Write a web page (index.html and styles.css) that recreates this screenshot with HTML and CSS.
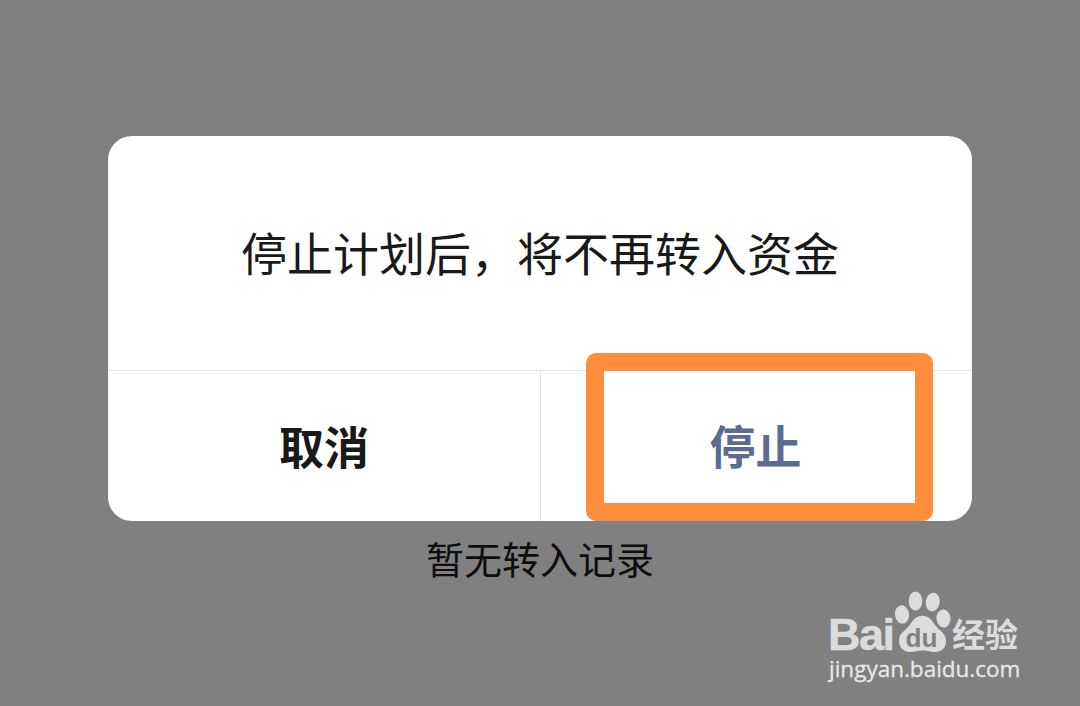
FILE: index.html
```html
<!DOCTYPE html>
<html lang="zh-CN">
<head>
    <meta charset="UTF-8">
    <meta name="viewport" content="width=device-width, initial-scale=1.0">
    <title>停止计划</title>
    <link rel="stylesheet" href="styles.css">
</head>
<body>
    <div class="dialog">
        <div class="message">停止计划后，将不再转入资金</div>
        <div class="actions">
            <button class="btn cancel">取消</button>
            <button class="btn stop">停止</button>
        </div>
        <div class="highlight"></div>
    </div>
    <p class="empty">暂无转入记录</p>

    <div class="watermark">
        <div class="brand">
            <span class="bai">Bai</span>
            <svg class="paw" width="58" height="62" viewBox="0 0 58 62">
                <g fill="#dcdcdc">
                    <ellipse cx="8" cy="24.5" rx="7" ry="9.2" transform="rotate(-8 8 24.5)"/>
                    <ellipse cx="21.5" cy="11" rx="6.8" ry="9.4"/>
                    <ellipse cx="38.7" cy="12" rx="7" ry="9.4" transform="rotate(10 38.7 12)"/>
                    <ellipse cx="49.5" cy="28.5" rx="7" ry="9" transform="rotate(-5 49.5 28.5)"/>
                    <path d="M28.5 25.7c-6.500 0-9 4-13 9.500C11 41 5 43 5 50.500c0 7.500 5 11.500 11 11.500 5 0 8-1.500 13-1.500s7 1.500 12 1.500c6.500 0 11-4 11-11 0-7.500-6-10-10.500-15.500C37.500 30 35 25.700 28.500 25.700z"/>
                </g>
                <text class="du" x="11.5" y="56.5" textLength="32" lengthAdjust="spacingAndGlyphs">du</text>
            </svg>
            <span class="jingyan">经验</span>
        </div>
        <div class="site">jingyan.baidu.com</div>
    </div>
</body>
</html>
```
FILE: styles.css
```css
* {
    box-sizing: border-box;
}
body {
    margin: 0;
    height: 706px;
    padding-top: 136px;
    overflow: hidden;
    position: relative;
    background-color: #808080;
    font-family: 'Noto Sans CJK SC', sans-serif;
}
.dialog {
    position: relative;
    width: 864px;
    height: 385px;
    margin: 0 auto;
    background-color: #fff;
    border-radius: 24px;
}
.message {
    height: 234px;
    line-height: 231px;
    text-align: center;
    font-size: 46px;
    color: #191919;
}
.actions {
    display: flex;
    height: 151px;
    border-top: 1px solid #e5e5e5;
}
.btn {
    width: 50%;
    padding: 0 0 2px;
    border: none;
    background: none;
    font-family: inherit;
    font-size: 45px;
    font-weight: bold;
    color: #191919;
}
.stop {
    padding-right: 2px;
    padding-bottom: 4px;
    border-left: 1px solid #e5e5e5;
    font-size: 46px;
    color: #5d6b92;
}
.highlight {
    position: absolute;
    left: 478px;
    top: 217px;
    width: 347px;
    height: 168px;
    border: 18px solid #ff8e3c;
    border-radius: 10px;
}
.empty {
    margin: 10px 0 0;
    text-align: center;
    font-size: 38px;
    line-height: 54px;
    color: #0d0d0d;
}
.watermark {
    position: absolute;
    left: 828px;
    top: 590px;
    width: 200px;
    color: #dcdcdc;
}
.brand {
    display: flex;
    align-items: flex-end;
    height: 62px;
}
.bai {
    width: 66px;
    margin-bottom: -5px;
    font-family: 'Liberation Sans', sans-serif;
    font-size: 45px;
    line-height: 45px;
    font-weight: bold;
    letter-spacing: -1.5px;
    -webkit-text-stroke: 0.5px #dcdcdc;
}
.paw {
    flex: none;
}
.du {
    font-family: 'Liberation Sans', sans-serif;
    font-size: 26px;
    font-weight: bold;
    fill: #808080;
}
.jingyan {
    font-size: 33px;
    line-height: 38px;
    font-weight: bold;
    white-space: nowrap;
}
.site {
    padding-left: 1px;
    margin-top: 1px;
    font-family: 'Open Sans', 'Noto Sans', sans-serif;
    font-size: 22.5px;
    line-height: 32px;
    color: #e8e8e8;
    -webkit-text-stroke: 0.3px #e8e8e8;
    white-space: nowrap;
}
```
